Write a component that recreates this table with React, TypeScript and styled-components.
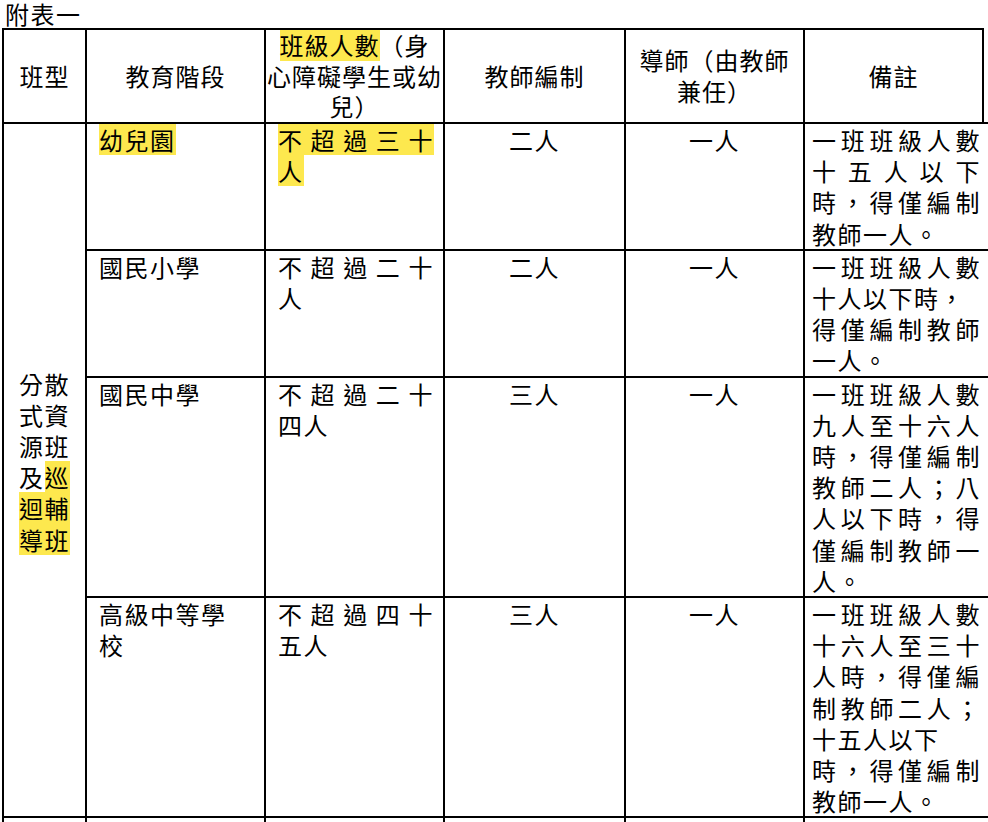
import React from 'react';
import styled, { createGlobalStyle } from 'styled-components';

const HL = '#fde84e';

const GlobalStyle = createGlobalStyle`
  html, body {
    margin: 0;
    padding: 0;
    background: #fff;
    overflow: hidden;
  }
  body {
    font-family: "Noto Sans CJK TC", "Noto Sans CJK SC", sans-serif;
    color: #000;
  }
`;

const Page = styled.div`
  padding-left: 2px;
`;

const Title = styled.div`
  font-size: 24px;
  line-height: 28px;
  letter-spacing: 1.5px;
  padding-left: 3px;
`;

const Table = styled.table`
  border-collapse: collapse;
  table-layout: fixed;
  width: 997px;
  font-size: 24px;
  letter-spacing: 1.5px;
`;

const HeadCell = styled.th`
  border: 2px solid #000;
  font-weight: 400;
  text-align: center;
  vertical-align: middle;
  white-space: nowrap;
  letter-spacing: 1px;
  line-height: 30.67px;
  padding: 0;
`;

const BlankHead = styled.th`
  border: none;
  padding: 0;
`;

const BodyCell = styled.td`
  border: 2px solid #000;
  vertical-align: top;
  text-align: left;
  line-height: 31.2px;
  padding: 0;
`;

const TypeCell = styled(BodyCell)`
  vertical-align: middle;
  text-align: center;
  padding-bottom: 18px;
`;

const StageCell = styled(BodyCell)`
  padding: 0 6px 0 12px;
`;

const CountCell = styled(BodyCell)`
  padding: 0 9px 0 12px;
`;

const StaffCell = styled(BodyCell)`
  text-align: center;
`;

const NoteCell = styled(BodyCell)`
  padding: 0 18px 0 7px;
`;

const TailCell = styled(BodyCell)`
  height: 30px;
`;

const Line = styled.div<{ $spread?: boolean; $hl?: boolean }>`
  text-align: ${(p) => (p.$spread ? 'justify' : 'inherit')};
  text-align-last: ${(p) => (p.$spread ? 'justify' : 'auto')};
  background: ${(p) => (p.$hl ? HL : 'transparent')};
`;

const Mark = styled.span`
  display: inline-block;
  background: ${HL};
`;

type LineSpec = { t: string; spread?: boolean; hl?: boolean; mark?: boolean };

type RowSpec = {
  stage: LineSpec[];
  count: LineSpec[];
  teachers: string;
  mentor: string;
  note: LineSpec[];
};

const rows: RowSpec[] = [
  {
    stage: [{ t: '幼兒園', mark: true }],
    count: [
      { t: '不超過三十', spread: true, hl: true },
      { t: '人', mark: true },
    ],
    teachers: '二人',
    mentor: '一人',
    note: [
      { t: '一班班級人數', spread: true },
      { t: '十五人以下', spread: true },
      { t: '時，得僅編制', spread: true },
      { t: '教師一人。' },
    ],
  },
  {
    stage: [{ t: '國民小學' }],
    count: [{ t: '不超過二十', spread: true }, { t: '人' }],
    teachers: '二人',
    mentor: '一人',
    note: [
      { t: '一班班級人數', spread: true },
      { t: '十人以下時，' },
      { t: '得僅編制教師', spread: true },
      { t: '一人。' },
    ],
  },
  {
    stage: [{ t: '國民中學' }],
    count: [{ t: '不超過二十', spread: true }, { t: '四人' }],
    teachers: '三人',
    mentor: '一人',
    note: [
      { t: '一班班級人數', spread: true },
      { t: '九人至十六人', spread: true },
      { t: '時，得僅編制', spread: true },
      { t: '教師二人；八', spread: true },
      { t: '人以下時，得', spread: true },
      { t: '僅編制教師一', spread: true },
      { t: '人。' },
    ],
  },
  {
    stage: [{ t: '高級中等學' }, { t: '校' }],
    count: [{ t: '不超過四十', spread: true }, { t: '五人' }],
    teachers: '三人',
    mentor: '一人',
    note: [
      { t: '一班班級人數', spread: true },
      { t: '十六人至三十', spread: true },
      { t: '人時，得僅編', spread: true },
      { t: '制教師二人；', spread: true },
      { t: '十五人以下' },
      { t: '時，得僅編制', spread: true },
      { t: '教師一人。' },
    ],
  },
];

function Lines({ lines }: { lines: LineSpec[] }) {
  return (
    <>
      {lines.map((l, i) => (
        <Line key={i} $spread={l.spread} $hl={l.hl}>
          {l.mark ? <Mark>{l.t}</Mark> : l.t}
        </Line>
      ))}
    </>
  );
}

export default function App() {
  return (
    <Page>
      <GlobalStyle />
      <Title>附表一</Title>
      <Table>
        <colgroup>
          <col style={{ width: 83 }} />
          <col style={{ width: 179 }} />
          <col style={{ width: 179 }} />
          <col style={{ width: 181 }} />
          <col style={{ width: 179 }} />
          <col style={{ width: 179 }} />
          <col style={{ width: 17 }} />
        </colgroup>
        <thead>
          <tr>
            <HeadCell>班型</HeadCell>
            <HeadCell>教育階段</HeadCell>
            <HeadCell>
              <Mark>班級人數</Mark>（身
              <br />
              心障礙學生或幼
              <br />
              兒）
            </HeadCell>
            <HeadCell>教師編制</HeadCell>
            <HeadCell>
              導師（由教師
              <br />
              兼任）
            </HeadCell>
            <HeadCell>備註</HeadCell>
            <BlankHead />
          </tr>
        </thead>
        <tbody>
          {rows.map((r, i) => (
            <tr key={i}>
              {i === 0 && (
                <TypeCell rowSpan={rows.length}>
                  <div>分散</div>
                  <div>式資</div>
                  <div>源班</div>
                  <div>
                    及<Mark>巡</Mark>
                  </div>
                  <div>
                    <Mark>迴輔</Mark>
                  </div>
                  <div>
                    <Mark>導班</Mark>
                  </div>
                </TypeCell>
              )}
              <StageCell>
                <Lines lines={r.stage} />
              </StageCell>
              <CountCell>
                <Lines lines={r.count} />
              </CountCell>
              <StaffCell>{r.teachers}</StaffCell>
              <StaffCell>{r.mentor}</StaffCell>
              <NoteCell colSpan={2}>
                <Lines lines={r.note} />
              </NoteCell>
            </tr>
          ))}
          <tr>
            <TailCell />
            <TailCell />
            <TailCell />
            <TailCell />
            <TailCell />
            <TailCell colSpan={2} />
          </tr>
        </tbody>
      </Table>
    </Page>
  );
}
